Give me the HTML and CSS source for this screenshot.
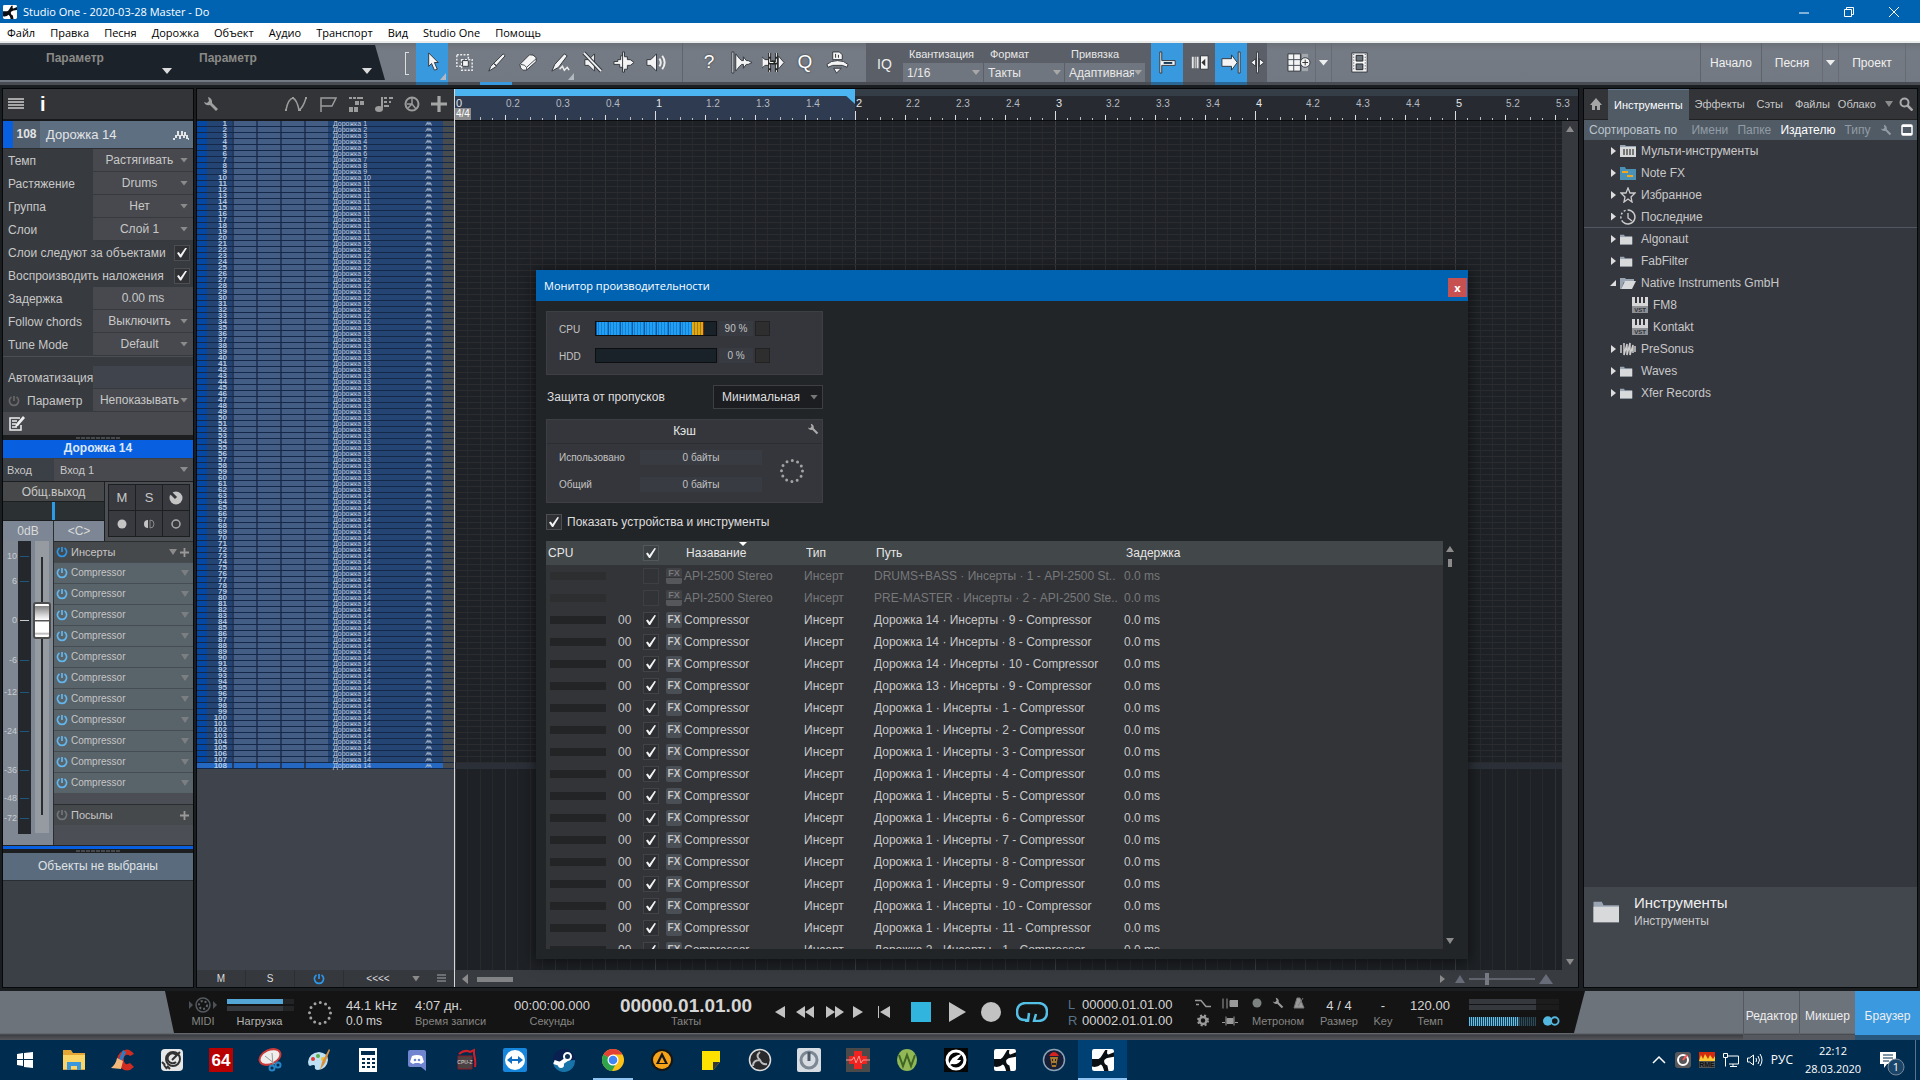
FILE: index.html
```html
<!DOCTYPE html>
<html lang="ru">
<head>
<meta charset="utf-8">
<title>Studio One - 2020-03-28 Master - Do</title>
<link rel="stylesheet" href="styles.css">
</head>
<body>
<svg class="defs" aria-hidden="true">
  <symbol id="logo" viewBox="0 0 20 20"><rect width="20" height="20" rx="2" fill="#fff"/><path d="M0 9h6q2-1 3-3l3-5h2q-1 4 1 4l5-2v4l-5 1q-4 1-4 3 0 3 3 4l1 5h-4q-1-5-3-6-3 3-8 2z" fill="#0a0f14"/></symbol>
  <symbol id="wrench" viewBox="0 0 16 16"><path d="M5 1a5 5 0 0 1 4 6l6 6-2 2-6-6A5 5 0 0 1 1 6l3 1 2-2z" fill="currentColor"/></symbol>
  <symbol id="power" viewBox="0 0 12 12"><path d="M3.500 2a4.600 4.600 0 1 0 5 0M6 1v5" fill="none" stroke="currentColor" stroke-width="1.700"/></symbol>
  <symbol id="wave" viewBox="0 0 16 12"><path d="M0 9h2v2H0zM2 6h2v3H2zM4 2h2v5H4zM6 6h2v4H6zM8 2h2v5H8zM10 6h2v3h-2zM11 3h2v4h-2zM13 6h2v4h-2zM15 9h1v2h-1z" fill="currentColor"/></symbol>
  <symbol id="plus" viewBox="0 0 10 10"><path d="M4 0h2v4h4v2H6v4H4V6H0V4h4z" fill="currentColor"/></symbol>
  <symbol id="spin" viewBox="0 0 26 26"><circle cx="13" cy="13" r="10.500" fill="none" stroke="#a3a3a3" stroke-width="3" stroke-linecap="round" stroke-dasharray="0 5.498"/></symbol>
  <symbol id="folder" viewBox="0 0 16 14"><path d="M0 1h5l1 2h9v10H0z" fill="#9aa5b3"/><path d="M0 4h15v9H0z" fill="#d7d9db"/></symbol>
  <symbol id="vst" viewBox="0 0 16 16"><path d="M0 0h16v9H0z" fill="#d5d6d8"/><path d="M3 0h2v6H3zM7 0h2v6H7zM11 0h2v6h-2z" fill="#33353c"/><path d="M0 9h16v7H0z" fill="#8d9095"/><text x="8" y="15" font-size="6" font-weight="700" text-anchor="middle" fill="#2d2f35" font-family="Liberation Sans, sans-serif">VST</text></symbol>
</svg>

<header class="titlebar">
  <svg class="app-icon"><use href="#logo"/></svg>
  <span class="grow">Studio One - 2020-03-28 Master - Do</span>
  <button class="win" aria-label="Свернуть"><svg viewBox="0 0 10 10"><path d="M0 6h10" /></svg></button>
  <button class="win" aria-label="Восстановить"><svg viewBox="0 0 10 10"><path d="M.5 2.500h7v7h-7zM2.500 2.500v-2h7v7h-2"/></svg></button>
  <button class="win" aria-label="Закрыть"><svg viewBox="0 0 10 10"><path d="M0 0l10 10M10 0L0 10"/></svg></button>
</header>
<nav class="menubar">
  <a href="#">Файл</a><a href="#">Правка</a><a href="#">Песня</a><a href="#">Дорожка</a><a href="#">Объект</a><a href="#">Аудио</a><a href="#">Транспорт</a><a href="#">Вид</a><a href="#">Studio One</a><a href="#">Помощь</a>
</nav>

<div class="toolbar">
  <div class="params"><button class="param">Параметр</button><button class="param">Параметр</button></div>
  <div class="tools">
    <span class="bracket"></span>
    <button class="tool on corner" aria-label="Стрелка"><svg viewBox="0 0 24 24"><path class="w" d="M8 2l10 10h-4l3 7-3 1-3-7-3 3z"/></svg></button>
    <button class="tool" aria-label="Диапазон"><svg viewBox="0 0 24 24"><path d="M4 4h12v12H4zM9 9h11v11H9z" fill="none" stroke="#eee" stroke-width="1.500" stroke-dasharray="2 1.500"/><path class="w" d="M10 10h6v6h-6z"/></svg></button>
    <button class="tool under" aria-label="Разрез"><svg viewBox="0 0 24 24"><path class="w" d="M19 3l2 2-9 10-3-2zM9 13l3 3-8 5 2-5z"/></svg></button>
    <button class="tool" aria-label="Ластик"><svg viewBox="0 0 24 24"><path class="w" d="M3 14L13 4q4-1 7 3v4L10 20H6q-3-2-3-6z"/><path d="M4 14q4 0 6 3l10-9M10 17v3" fill="none" stroke="#444a52"/></svg></button>
    <button class="tool corner" aria-label="Карандаш"><svg viewBox="0 0 24 24"><path class="w" d="M16 3l3 2-9 12-7 4 3-7z"/><path d="M11 19l3-3 2 4 3-3 2 3" fill="none" stroke="#eee" stroke-width="1.500"/></svg></button>
    <button class="tool" aria-label="Заглушить"><svg viewBox="0 0 24 24"><path class="w" d="M4 9h4l6-6v18l-6-6H4z"/><path d="M3 2l18 19" stroke="#333840" stroke-width="4"/><path d="M3 2l18 19" stroke="#eee" stroke-width="2"/></svg></button>
    <button class="tool" aria-label="Сгиб"><svg viewBox="0 0 24 24"><path class="w" d="M1 11h4V9h3V5h2V1h2v5h3v3h3l4 3-4 3h-3v4h-3v3h-2v-5H7v-3H1z"/><path d="M10 2v19" stroke="#32373e"/></svg></button>
    <button class="tool" aria-label="Прослушать"><svg viewBox="0 0 24 24"><path class="w" d="M2 9h4l6-6v18l-6-6H2z"/><path d="M15 8q3 4 0 8M18 5q5 7 0 14" fill="none" stroke="#eee" stroke-width="2"/></svg></button>
  </div>
  <div class="tools second">
    <button class="tool glyph">?</button>
    <button class="tool" aria-label="Транзиенты"><svg viewBox="0 0 24 24"><path class="w" d="M2 1h2v22H2zM6 3l4 5 2 2h2V6l3 4h2l4 2-4 2h-2l-3 4v-4h-2l-2 2-4 5z"/></svg></button>
    <button class="tool" aria-label="Метки"><svg viewBox="0 0 24 24"><path class="w" d="M0 6l3 3h4v6H3l-3 3zM10 10h4v4h-4zM17 5l6 7-6 7z"/><path d="M8 2v20M15 2v20M8 12h7" stroke="#222" stroke-width="3"/><path d="M8 2v20M15 2v20M8 12h7" stroke="#fff" stroke-dasharray="4 2"/></svg></button>
    <button class="tool glyph">Q</button>
    <button class="tool" aria-label="Макросы"><svg viewBox="0 0 24 24"><path class="w" d="M7 1h7l3 3v5H7zM1 14q4-4 11-4t11 4l-1 3-5-2H7l-5 2zM8 18h8l-5 5z"/><path d="M10 3v4M13 4v3" stroke="#333"/></svg></button>
  </div>
  <div class="quant">
    <button class="iq">IQ</button>
    <div class="qf"><label for="q1">Квантизация</label><span class="sel"><select id="q1"><option>1/16</option></select></span></div>
    <div class="qf"><label for="q2">Формат</label><span class="sel"><select id="q2"><option>Такты</option></select></span></div>
    <div class="qf"><label for="q3">Привязка</label><span class="sel"><select id="q3"><option>Адаптивная</option></select></span></div>
    <button class="tool on gapl" aria-label="Привязка к сетке"><svg viewBox="0 0 24 24"><path class="w" d="M4 1h2v9h14v5H6v8H4z"/><path d="M8 12.500h9" stroke="#183a57" stroke-width="2"/></svg></button>
    <button class="tool" aria-label="Следование"><svg viewBox="0 0 24 24"><path d="M4 6h2v12H4zM7 6h1v12H7zM9 6h2v12H9z" fill="#e5e5e5"/><path class="w" d="M13 5h8v14h-8z"/><path d="M18 8v8l-4-4z" fill="#333"/></svg></button>
    <button class="tool on" aria-label="Автопрокрутка"><svg viewBox="0 0 24 24"><path class="w" d="M2 8h10V4l6 8-6 8v-4H2zM19 1h2v22h-2z"/></svg></button>
    <button class="tool slim" aria-label="Курсор"><svg viewBox="0 0 18 24"><path class="w" d="M8 1h2v22H8zM7 8v8l-5-4zM11 8v8l5-4z"/></svg></button>
  </div>
  <button class="tool wide" aria-label="Сетка"><svg viewBox="0 0 26 24"><path class="w" d="M2 3h13v18H2z"/><path d="M16 3h7v18h-7z" fill="#a3a7ae"/><path d="M2 9h21M2 15h21M8 3v18M15.500 3v18" stroke="#444b55" fill="none"/><circle class="w" cx="20" cy="12" r="5"/><path d="M17 12h6M20 9v6" stroke="#333"/></svg></button>
  <button class="tool mini tri" aria-label="Ещё"></button>
  <button class="tool film" aria-label="Видео"><svg viewBox="0 0 24 24"><path class="w" d="M4 2h16v20H4z"/><path d="M8.500 4.500h7v6h-7zM8.500 13.500h7v6h-7z" fill="#6b7179" stroke="#20242a"/><path d="M6 3v18M18 3v18" stroke="#333" stroke-dasharray="1 2"/></svg></button>
  <span class="grow"></span>
  <button class="page">Начало</button><button class="page">Песня</button><button class="tool mini tri" aria-label="Песни"></button><button class="page last">Проект</button><span class="endcap"></span>
</div>

<main class="work">
  <aside class="panel inspector">
    <div class="head"><svg class="i16" viewBox="0 0 16 12"><path d="M0 1h16M0 4h16M0 7h16M0 10h16" stroke="#a7a7a7" stroke-width="2"/></svg><b class="info">i</b></div>
    <div class="trk"><i></i><b>108</b><span>Дорожка 14</span><svg class="i16"><use href="#wave"/></svg></div>
    <div class="form">
      <label for="f1">Темп</label><span class="sel"><select id="f1"><option>Растягивать</option></select></span>
      <label for="f2">Растяжение</label><span class="sel"><select id="f2"><option>Drums</option></select></span>
      <label for="f3">Группа</label><span class="sel"><select id="f3"><option>Нет</option></select></span>
      <label for="f4">Слои</label><span class="sel"><select id="f4"><option>Слой 1</option></select></span>
      <label class="span" for="f5">Слои следуют за объектами<input type="checkbox" id="f5" checked></label>
      <label class="span" for="f6">Воспроизводить наложения<input type="checkbox" id="f6" checked></label>
      <label for="f7">Задержка</label><input class="val" id="f7" value="0.00 ms">
      <label for="f8">Follow chords</label><span class="sel"><select id="f8"><option>Выключить</option></select></span>
      <label for="f9">Tune Mode</label><span class="sel"><select id="f9"><option>Default</option></select></span>
      <div class="sep"></div>
      <label for="f10">Автоматизация</label><input class="val cool" id="f10" value="">
      <label for="f11" class="dim"><svg class="i12"><use href="#power"/></svg>Параметр</label><span class="sel"><select id="f11"><option>Непоказывать</option></select></span>
    </div>
    <div class="note"><svg class="i16" viewBox="0 0 16 16"><path d="M11 3H1v12h11v-5M3 6h5M3 9h4M3 12h5" fill="none" stroke="#eee" stroke-width="1.500"/><path d="M14 1l2 2-7 8-3 1 1-3z" fill="#eee"/></svg></div>
    <div class="grip"></div>
    <div class="chan-name">Дорожка 14</div>
    <div class="input-row"><label for="inp">Вход</label><span class="sel"><select id="inp"><option>Вход 1</option></select></span></div>
    <div class="chan-top">
      <div class="outs"><button class="out">Общ.выход</button><div class="pan"></div><div class="db"><span>0dB</span><span>&lt;C&gt;</span></div></div>
      <div class="ms"><button>M</button><button>S</button><button aria-label="Монитор"><svg viewBox="0 0 14 14"><circle cx="7" cy="7" r="6.500" fill="#c4c4c4"/><path d="M7 7L2 2" stroke="#33363b" stroke-width="3"/></svg></button><button aria-label="Запись"><svg viewBox="0 0 14 14"><circle cx="7" cy="7" r="4.500" fill="#c4c4c4"/></svg></button><button aria-label="Моно"><svg viewBox="0 0 14 14"><path d="M6 3a4 4 0 0 0 0 8z" fill="#c4c4c4"/><path d="M8 3a4 4 0 0 1 0 8z" fill="none" stroke="#888"/></svg></button><button aria-label="Стерео"><svg viewBox="0 0 14 14"><circle cx="7" cy="7" r="4" fill="none" stroke="#aaa" stroke-width="1.500"/></svg></button></div>
    </div>
    <div class="strip">
      <div class="fader">
        <div class="scale"><span>10</span><span>6</span><span>0</span><span>-6</span><span>-12</span><span>-24</span><span>-36</span><span>-48</span><span>-72</span></div>
        <input type="range" aria-label="Громкость" min="0" max="100" value="76">
      </div>
      <div class="inserts">
        <div class="ins-head on"><svg class="i12"><use href="#power"/></svg><span>Инсерты</span><i class="dn"></i><svg class="i9"><use href="#plus"/></svg></div>
        <div id="inserts"></div>
        <div class="ins-gap"></div>
        <div class="ins-head"><svg class="i12"><use href="#power"/></svg><span>Посылы</span><svg class="i9"><use href="#plus"/></svg></div>
      </div>
    </div>
    <div class="blue-line"></div>
    <div class="grip"></div>
    <div class="none">Объекты не выбраны</div>
  </aside>

  <section class="panel editor">
    <div class="tracks">
      <div class="head">
        <svg class="i16"><use href="#wrench"/></svg><span class="grow"></span>
        <svg class="i22" viewBox="0 0 24 16"><path d="M2 14Q4 3 9 2q4 2 6 12Q19 12 22 2" fill="none" stroke="#9c9c9c" stroke-width="1.500"/><path d="M1 13h2v2H1zM8 1h2v2H8zM14 13h3v2h-3zM21 1h2v2h-2z" fill="#9c9c9c"/></svg>
        <svg class="i18" viewBox="0 0 18 16"><path d="M2 16V2h15l-4 8H2" fill="none" stroke="#9c9c9c" stroke-width="1.500"/></svg>
        <svg class="i16" viewBox="0 0 16 16"><path d="M1 1h3v2H1zM5 1h3v2H5zM9 1h6v2H9zM7 5h4v4H7zM12 5h4v4h-4zM1 11h4v5H1zM6 11h4v5H6z" fill="#9c9c9c"/></svg>
        <svg class="i18" viewBox="0 0 18 16"><path d="M7 1v11" stroke="#9c9c9c" stroke-width="2"/><ellipse cx="4" cy="13" rx="4" ry="3" fill="#9c9c9c"/><path d="M9 2h3M14 2h4M9 6h3M14 6h2M9 10h5" stroke="#9c9c9c" stroke-width="2"/></svg>
        <svg class="i16" viewBox="0 0 16 16"><circle cx="8" cy="8" r="6.500" fill="none" stroke="#9c9c9c" stroke-width="2"/><path d="M8 2v6H3M8 8l4 5M8 8l-4 4" fill="none" stroke="#9c9c9c" stroke-width="1.500"/></svg>
        <svg class="i16" viewBox="0 0 10 10"><path d="M4 0h2v4h4v2H6v4H4V6H0V4h4z" fill="#a5a5a5"/></svg>
      </div>
      <div id="tracks"></div>
      <div class="track-foot"><button>M</button><button>S</button><button class="pw" aria-label="Питание"><svg class="i12"><use href="#power"/></svg></button><button class="more">&lt;&lt;&lt;&lt;</button><i class="dn"></i><svg class="i9" viewBox="0 0 9 9"><path d="M0 1h9M0 4h9M0 7h9" stroke="#6c6f74" stroke-width="2"/></svg></div>
    </div>
    <div class="arrange">
      <div class="ruler"><div class="loop"></div><div id="beats"></div><span class="sig">4/4</span></div>
      <div class="canvas"><div class="lanes"></div></div>
      <div class="vscroll"><i class="up"></i><i class="dn"></i></div>
      <div class="hscroll"><i class="lt"></i><b></b><span class="grow"></span><i class="rt"></i><i class="up s"></i><span class="zoom"><u></u></span><i class="up b"></i></div>
    </div>

    <div class="dialog" role="dialog" aria-label="Монитор производительности">
      <div class="dlg-title"><span>Монитор производительности</span><button aria-label="Закрыть">x</button></div>
      <div class="dlg-body">
        <div class="box meters">
          <span>CPU</span><div class="meter"><i style="width:80%"></i><em style="width:10%"></em></div><b>90 %</b><u></u>
          <span>HDD</span><div class="meter"></div><b>0 %</b><u></u>
        </div>
        <div class="protect"><label for="pr">Защита от пропусков</label><span class="sel"><select id="pr"><option>Минимальная</option></select></span></div>
        <div class="box cache">
          <div class="cache-h"><span>Кэш</span><svg class="i12"><use href="#wrench"/></svg></div>
          <div class="cache-b"><span>Использовано</span><b>0 байты</b><svg class="i26"><use href="#spin"/></svg><span>Общий</span><b>0 байты</b></div>
        </div>
        <label class="show" for="sh"><input type="checkbox" id="sh" checked>Показать устройства и инструменты</label>
        <div class="list">
          <div class="list-view">
            <table>
              <colgroup><col class="c1"><col class="c2"><col class="c3"><col class="c4"><col class="c5"><col class="c6"><col class="c7"><col></colgroup>
              <thead><tr><th colspan="2">CPU</th><th><input type="checkbox" aria-label="Все" checked></th><th></th><th class="sorted">Назавание</th><th>Тип</th><th>Путь</th><th>Задержка</th></tr></thead>
              <tbody id="devices"></tbody>
            </table>
          </div>
          <div class="list-scroll"><i class="up"></i><b></b><i class="dn"></i></div>
        </div>
      </div>
    </div>
  </section>

  <aside class="panel browser">
    <div class="tabs">
      <a href="#" class="home" aria-label="Домой"><svg class="i12" viewBox="0 0 12 12"><path d="M6 0l6 7h-2v5H7V8H5v4H2V7H0z" fill="#a5a5a5"/></svg></a>
      <a href="#" class="act">Инструменты</a><a href="#">Эффекты</a><a href="#">Сэты</a><a href="#">Файлы</a><a href="#" class="cloud">Облако</a><i class="dn"></i>
      <svg class="i14" viewBox="0 0 14 14"><circle cx="5.500" cy="5.500" r="4" fill="none" stroke="#aaa" stroke-width="2"/><path d="M8.500 8.500l5 5" stroke="#aaa" stroke-width="2.500"/></svg>
    </div>
    <div class="sort"><span class="lead">Сортировать по</span><a href="#">Имени</a><a href="#">Папке</a><a href="#" class="act">Издателю</a><a href="#">Типу</a><svg class="i12"><use href="#wrench"/></svg><svg class="i12" viewBox="0 0 12 12"><rect x="1" y="1" width="10" height="10" rx="1" fill="none" stroke="#fff" stroke-width="1.500"/><path d="M1 1h10v2H1zM1 9h10v2H1z" fill="#fff"/></svg></div>
    <ul class="tree">
      <li><i class="rt"></i><svg viewBox="0 0 16 14"><path d="M0 1h5l1 1h10v11H0z" fill="#9aa5b3"/><path d="M0 3h16v10H0z" fill="#d7d9db"/><path d="M4 5v6M7 5v6M10 5v6M13 5v6" stroke="#555" stroke-width="1.500"/></svg>Мульти-инструменты</li>
      <li><i class="rt"></i><svg viewBox="0 0 16 14"><path d="M0 1h5l1 2h10v11H0z" fill="#4b90b5"/><path d="M2 6h6M7 10h6" stroke="#f5a71c" stroke-width="2"/></svg>Note FX</li>
      <li><i class="rt"></i><svg viewBox="0 0 16 16"><path d="M8 1l2 5h5l-4 4 1 5-4-3-4 3 1-5-4-4h5z" fill="none" stroke="#ccc" stroke-width="1.300"/></svg>Избранное</li>
      <li class="last"><i class="rt"></i><svg viewBox="0 0 16 16"><path d="M8 1a7 7 0 1 1-5 12" fill="none" stroke="#ccc" stroke-width="1.500"/><path d="M3 13A7 7 0 0 1 8 1" fill="none" stroke="#ccc" stroke-width="1.500" stroke-dasharray="2 2"/><path d="M8 4v5l4 3" fill="none" stroke="#ccc" stroke-width="1.300"/></svg>Последние</li>
      <li><i class="rt"></i><svg class="f"><use href="#folder"/></svg>Algonaut</li>
      <li><i class="rt"></i><svg class="f"><use href="#folder"/></svg>FabFilter</li>
      <li><i class="open"></i><svg viewBox="0 0 16 14"><path d="M0 2h5l1 1h8v3H4l-3 7H0z" fill="#9aa5b3"/><path d="M5 5h11l-4 8H1z" fill="#d7d9db"/></svg>Native Instruments GmbH</li>
      <li class="sub"><svg><use href="#vst"/></svg>FM8</li>
      <li class="sub"><svg><use href="#vst"/></svg>Kontakt</li>
      <li><i class="rt"></i><svg viewBox="0 0 16 14"><path d="M1 3v8M4 1v12l3-11v11l3-12v12l3-10v8M15 4v6" fill="none" stroke="#ccc" stroke-width="1.500"/></svg>PreSonus</li>
      <li><i class="rt"></i><svg class="f"><use href="#folder"/></svg>Waves</li>
      <li><i class="rt"></i><svg class="f"><use href="#folder"/></svg>Xfer Records</li>
    </ul>
    <div class="preview"><svg viewBox="0 0 16 14"><use href="#folder"/></svg><div><strong>Инструменты</strong><span>Инструменты</span></div></div>
  </aside>
</main>

<div class="transport">
  <div class="tp">
    <div class="c"><svg class="midi" viewBox="0 0 28 16"><circle cx="14" cy="8" r="7" fill="none" stroke="#555a60" stroke-width="1.500"/><circle cx="14" cy="8" r="4" fill="none" stroke="#60656b" stroke-width="2" stroke-dasharray="2 2"/><path d="M0 4l4 4-4 4zM24 4l4 4-4 4z" fill="#4c5157"/></svg><small>MIDI</small></div>
    <div class="load"><div class="bar"><i style="width:83%"></i></div><div class="bar"></div><small>Нагрузка</small></div>
    <div class="c mid"><svg class="i26"><use href="#spin"/></svg></div>
    <div class="l"><span>44.1 kHz</span><span class="tight">0.0 ms</span></div>
    <div class="l"><span>4:07 дн.</span><small>Время записи</small></div>
    <div class="c"><span>00:00:00.000</span><small>Секунды</small></div>
    <div class="c"><strong>00000.01.01.00</strong><small>Такты</small></div>
    <div class="nav"><button aria-label="Назад"><svg viewBox="0 0 12 12"><path d="M11 0v12L1 6z"/></svg></button><button class="w2" aria-label="Перемотка"><svg viewBox="0 0 18 12"><path d="M9 0v12L0 6zM18 0v12L9 6z"/></svg></button><button class="w2" aria-label="Вперёд быстро"><svg viewBox="0 0 18 12"><path d="M0 0v12l9-6zM9 0v12l9-6z"/></svg></button><button aria-label="Вперёд"><svg viewBox="0 0 12 12"><path d="M1 0v12l10-6z"/></svg></button><button class="rtz" aria-label="В начало"><svg viewBox="0 0 12 12"><path d="M0 0h1v12H0zM12 0v12L2 6z"/></svg></button></div>
    <div class="main"><button aria-label="Стоп"><svg viewBox="0 0 20 20"><path d="M0 0h20v20H0z" fill="#31b5df"/></svg></button><button aria-label="Пуск"><svg viewBox="0 0 20 20"><path d="M3 0v20l17-10z"/></svg></button><button aria-label="Запись"><svg viewBox="0 0 20 20"><circle cx="10" cy="10" r="10"/></svg></button><button class="cyc" aria-label="Цикл"><svg viewBox="0 0 32 20"><path d="M11 18H9Q1 18 1 10T9 1h14q8 1 8 9t-8 9h-5l2-7M13 11l-1 8H9" fill="none" stroke="#54c0e8" stroke-width="2.500"/></svg></button></div>
    <div class="lr"><span>L</span><b>00000.01.01.00</b><span>R</span><b>00002.01.01.00</b></div>
    <div class="four">
      <svg viewBox="0 0 16 12"><path d="M0 3h6l5 6h5M1 7h3M9 3" fill="none" stroke="#999" stroke-width="1.500"/></svg>
      <svg viewBox="0 0 16 12"><path d="M1 1v10M5 1v10M8 3h8v6H8z" stroke="#999" fill="#999"/></svg>
      <svg viewBox="0 0 16 12"><circle cx="8" cy="6" r="3.500" fill="none" stroke="#999" stroke-width="2.500"/><circle cx="8" cy="6" r="5" fill="none" stroke="#999" stroke-width="2" stroke-dasharray="2 2"/></svg>
      <svg viewBox="0 0 16 12"><path d="M4 2v9M12 2v9M5 4h6v5H5zM0 8h3M13 8h3" stroke="#999" fill="#999"/></svg>
    </div>
    <div class="c"><span class="met"><svg viewBox="0 0 12 12"><circle cx="6" cy="6" r="4.500" fill="#7b8280"/></svg><svg><use href="#wrench"/></svg><svg viewBox="0 0 12 12"><path d="M4 1h3l4 10H1zM10 1L5 9" fill="#999" stroke="#777"/></svg></span><small>Метроном</small></div>
    <div class="c"><span>4 / 4</span><small>Размер</small></div>
    <div class="c"><span>-</span><small>Key</small></div>
    <div class="c"><span>120.00</span><small>Темп</small></div>
    <div class="out-m"><div class="lv"></div><div class="lv"></div><div class="vol"><i></i><svg viewBox="0 0 18 10"><circle cx="5" cy="5" r="5" fill="#54b7df"/><circle cx="12.500" cy="5" r="4" fill="#141414" stroke="#54b7df" stroke-width="2"/></svg></div></div>
  </div>
  <button class="view">Редактор</button><button class="view">Микшер</button><button class="view on">Браузер</button>
</div>

<footer class="taskbar">
  <button aria-label="Пуск"><svg viewBox="0 0 24 24"><path d="M4 6l6-1v6H4zM11 5l9-1v7h-9zM4 12h6v6l-6-1zM11 12h9v8l-9-1z" fill="#fff"/></svg></button>
  <button aria-label="Проводник"><svg viewBox="0 0 24 24"><path d="M1 2h8l2 3h12v17H1z" fill="#e5a634"/><path d="M1 7h22v14H1z" fill="#fcd567"/><path d="M5 22v-8h14v8h-4v-4H9v4z" fill="#3b97dd"/></svg></button>
  <button aria-label="CCleaner"><svg viewBox="0 0 24 24"><path d="M23 6Q17-2 10 4t-1 15q7 7 14 0l-4-4q-5 3-6-2t2-6q2-1 4 1z" fill="#cf2c22"/><path d="M12 2l3 2-4 9-3-2z" fill="#2d7cc2"/><path d="M6 10l6 3-2 8-10-1q5-4 6-10z" fill="#f2b97b"/></svg></button>
  <button aria-label="Контроллер"><svg viewBox="0 0 24 24"><rect x="1" y="1" width="22" height="22" rx="4" fill="#e7e7e7"/><circle cx="13" cy="11" r="7" fill="none" stroke="#333" stroke-width="2"/><path d="M17 8a5 5 0 1 0-1 6M12 12l8-8M4 17l3 4M7 18l3 3M2 14l3 3" fill="none" stroke="#333" stroke-width="2"/></svg></button>
  <button aria-label="AIDA64"><svg viewBox="0 0 24 24"><path d="M0 0h24v24H0z" fill="#b80000"/><text x="12" y="18" font-size="17" font-weight="700" text-anchor="middle" fill="#fff" font-family="Liberation Sans, sans-serif">64</text></svg></button>
  <button aria-label="Ножницы"><svg viewBox="0 0 24 24"><ellipse cx="12" cy="9" rx="11" ry="7" transform="rotate(-25 12 9)" fill="#eee" stroke="#cc3b39" stroke-width="2"/><path d="M7 8l10 8M14 5l1 12" stroke="#999"/><circle cx="14" cy="20" r="2.500" fill="none" stroke="#2585c7" stroke-width="2"/><circle cx="20" cy="17" r="2.500" fill="none" stroke="#2585c7" stroke-width="2"/></svg></button>
  <button aria-label="Paint"><svg viewBox="0 0 24 24"><path d="M1 14Q2 5 12 4q9 1 9 8-1 9-10 10-4 0-3-4-1-2-5 0-2-1-2-4z" fill="#bfe0f2"/><circle cx="6" cy="11" r="2" fill="#dd3b30"/><circle cx="11" cy="8" r="2" fill="#57ad45"/><circle cx="16" cy="11" r="2" fill="#f1bd2d"/><path d="M22 1l-7 13-2 8 5-7 5-13z" fill="#d98f3d"/></svg></button>
  <button aria-label="Калькулятор"><svg viewBox="0 0 24 24"><path d="M3 0h18v24H3z" fill="#fff"/><path d="M5 3h14v4H5z" fill="#002c4d"/><path d="M6 11h13M6 15h13M6 19h13" stroke="#002c4d" stroke-width="2" stroke-dasharray="3 2"/></svg></button>
  <button aria-label="Discord"><svg viewBox="0 0 24 24"><path d="M5 2h14q2 0 2 2v19l-5-4H5q-2 0-2-2V4q0-2 2-2z" fill="#7184cf"/><path d="M7 8q5-2 10 0l2 6-3 2-2-1h-4l-2 1-3-2z" fill="#fff"/><circle cx="10" cy="12" r="1.300" fill="#7184cf"/><circle cx="14" cy="12" r="1.300" fill="#7184cf"/></svg></button>
  <button aria-label="CPU-Z"><svg viewBox="0 0 24 24"><path d="M4 8h14v13H4z" fill="#4b4244" stroke="#8e1a20"/><path d="M5 6q6-5 11-2l4-2v4q2 8 1 13" fill="none" stroke="#d11e27" stroke-width="2"/><text x="11" y="16" font-size="5" font-weight="700" text-anchor="middle" fill="#bbb" font-family="Liberation Sans, sans-serif">CPU-Z</text></svg></button>
  <button aria-label="TeamViewer"><svg viewBox="0 0 24 24"><rect width="24" height="24" rx="2" fill="#1686dc"/><circle cx="12" cy="12" r="10" fill="#fff"/><path d="M4 12l5-4v3h6V8l5 4-5 4v-3H9v3z" fill="#1270c4"/></svg></button>
  <button aria-label="Steam"><svg viewBox="0 0 24 24"><circle cx="12" cy="12" r="11" fill="#0a2050"/><path d="M1 14a11 11 0 0 0 22-2z" fill="#1773a8"/><path d="M2 14l6 2 7-5" stroke="#fff" stroke-width="4" fill="none"/><circle cx="15.500" cy="8.500" r="3.500" fill="#0f2d55" stroke="#fff" stroke-width="2"/><circle cx="9" cy="17" r="3" fill="#fff"/></svg></button>
  <button class="run" aria-label="Chrome"><svg viewBox="0 0 24 24"><circle cx="12" cy="12" r="11" fill="#fbc116"/><path d="M12 12L2.500 6.500A11 11 0 0 1 21.500 6.500H12z" fill="#e34133"/><path d="M12 12L2.500 6.500A11 11 0 0 0 11 23l5-9z" fill="#2fa24c"/><circle cx="12" cy="12" r="5.500" fill="#fff"/><circle cx="12" cy="12" r="4.300" fill="#4285f4"/></svg></button>
  <button aria-label="AIMP"><svg viewBox="0 0 24 24"><circle cx="12" cy="12" r="11" fill="#151515"/><circle cx="12" cy="12" r="9" fill="#f6a31a"/><path d="M12 4l6 12H6z" fill="#151515"/><path d="M12 9l3 6H9z" fill="#f6a31a"/></svg></button>
  <button aria-label="Заметки"><svg viewBox="0 0 24 24"><path d="M3 3h18v11l-7 8H3z" fill="#ffe100"/><path d="M14 22v-8h7z" fill="#363636"/></svg></button>
  <button aria-label="OBS"><svg viewBox="0 0 24 24"><circle cx="12" cy="12" r="10.500" fill="#2a2a2c" stroke="#ddd" stroke-width="1.500"/><path d="M12 4q-5 4 0 8 2 5 7 4M12 12q-7 0-7 6" fill="none" stroke="#bbb" stroke-width="2"/></svg></button>
  <button aria-label="Громкость"><svg viewBox="0 0 24 24"><rect width="24" height="24" rx="2" fill="#d7dde3"/><circle cx="12" cy="12" r="8" fill="none" stroke="#7c8894" stroke-width="3"/><path d="M12 4v9" stroke="#4c5967" stroke-width="3"/></svg></button>
  <button aria-label="LatencyMon"><svg viewBox="0 0 24 24"><path d="M0 0h24v24H0z" fill="#4a4a4a"/><path d="M8 3h8v5h5v8h-5v5H8v-5H3V8h5z" fill="#ef2320"/><path d="M0 12h6l2-3 2 6 3-7 2 7 2-3h7" fill="none" stroke="#ff9992"/></svg></button>
  <button aria-label="Waves"><svg viewBox="0 0 24 24"><ellipse cx="12" cy="12" rx="10" ry="11" fill="#91b854"/><path d="M4 7l4 11 4-11 4 11 4-11" fill="none" stroke="#3e6426" stroke-width="2"/></svg></button>
  <button aria-label="Драйвер"><svg viewBox="0 0 24 24"><path d="M0 0h24v24H0z" fill="#050505"/><circle cx="12" cy="12" r="9" fill="none" stroke="#fff" stroke-width="3"/><path d="M4 18Q8 7 18 6l-5 6h4q-2 5-9 4" fill="#fff"/></svg></button>
  <button aria-label="Studio One 3"><svg viewBox="0 0 24 24"><use href="#logo" x="1" y="1" width="22" height="22"/></svg></button>
  <button aria-label="Плеер"><svg viewBox="0 0 24 24"><circle cx="12" cy="12" r="10.500" fill="#171e36" stroke="#8ba1b6" stroke-width="1.500"/><path d="M7 8q5-8 10 0z" fill="#d42320"/><path d="M8 9h8l-2 10h-4z" fill="#a9782c"/><path d="M10 12h1M13 12h1M10 16h4" stroke="#222" stroke-width="2"/></svg></button>
  <button class="run cur" aria-label="Studio One"><svg viewBox="0 0 24 24"><use href="#logo" x="1" y="1" width="22" height="22"/></svg></button>
  <span class="grow"></span>
  <div class="tray">
    <svg viewBox="0 0 16 16"><path d="M2 11l6-6 6 6" fill="none" stroke="#fff" stroke-width="1.500"/></svg>
    <svg viewBox="0 0 16 16"><rect width="16" height="16" rx="3" fill="#58585a"/><circle cx="8" cy="8" r="5" fill="none" stroke="#fff" stroke-width="2"/><path d="M8 8l4-5" stroke="#f55" stroke-width="2"/></svg>
    <svg viewBox="0 0 16 16"><path d="M0 0h16v9H0z" fill="#d22b0d"/><path d="M0 9l2-6 2 4 2-5 3 5 2-4 3 4 2-3v6z" fill="#ffca35"/><path d="M0 9h16v7H0z" fill="#555"/><text x="8" y="15" font-size="7" font-weight="700" text-anchor="middle" fill="#111" font-family="Liberation Sans, sans-serif">RME</text></svg>
    <svg viewBox="0 0 16 16"><path d="M5 4h10.500v8H6M10 12v3M7 14.500h7M.5 1.500h4v4h-4zM2.500 5.500v9" fill="none" stroke="#fff"/></svg>
    <svg viewBox="0 0 16 16"><path d="M.5 6h2l4-3v10l-4-3h-2zM9 6q1 2 0 4M11 4q3 4 0 8M13 2q4 6 0 12" fill="none" stroke="#fff"/></svg>
    <span>РУС</span>
    <div class="clock"><span>22:12</span><span>28.03.2020</span></div>
    <svg class="note-ic" viewBox="0 0 26 26"><path d="M1 2h16v12H8l-3 4v-4H1z" fill="#fff"/><path d="M4 5h10M4 8h10M4 11h6" stroke="#002c4d"/><circle cx="17" cy="17" r="8" fill="#1b4568" stroke="#76899a"/><text x="17" y="21" font-size="11" text-anchor="middle" fill="#fff" font-family="Open Sans, sans-serif">1</text></svg>
  </div>
  <span class="peek"></span>
</footer>
<script src="app.js"></script>
</body>
</html>
```
FILE: app.js
```js
function fill(id, html) { document.getElementById(id).innerHTML = html; }

// Insert slots of the selected channel
fill('inserts', Array.from({ length: 11 }, () =>
  '<div class="ins"><svg class="i12"><use href="#power"/></svg><span>Compressor</span><i class="dn"></i></div>').join(''));

// Track list: 108 collapsed tracks
function trackName(n) {
  if (n <= 10) return n;
  if (n <= 20) return 11;
  if (n <= 34) return 12;
  if (n <= 62) return 13;
  return 14;
}
let rows = '';
for (let n = 1; n <= 108; n++) {
  rows += `<div class="tr${n === 108 ? ' cur' : ''}"><i class="clr"></i><b>${n}</b><i></i><i></i><i></i><i></i><span>Дорожка ${trackName(n)}</span><svg><use href="#wave"/></svg><u></u></div>`;
}
fill('tracks', rows);

// Ruler: four beats in a bar
let beats = '';
for (let i = 0; i < 23; i++) {
  const bar = Math.floor(i / 4), q = i % 4;
  beats += `<span class="${q ? 'beat' : 'bar1'}">${q ? bar + '.' + (q + 1) : bar}</span>`;
}
fill('beats', beats);

// Performance table
const list = [
  ['API-2500 Stereo', 'DRUMS+BASS · Инсерты · 1 - API-2500 St..', true],
  ['API-2500 Stereo', 'PRE-MASTER · Инсерты · 2 - API-2500 Ste..', true],
];
[[14, 9], [14, 8], [14, 10], [13, 9], [1, 1], [1, 2], [1, 3], [1, 4], [1, 5], [1, 6], [1, 7], [1, 8], [1, 9], [1, 10], [1, 11], [2, 1]]
  .forEach(([t, i]) => list.push(['Compressor', `Дорожка ${t} · Инсерты · ${i} - Compressor`, false]));
fill('devices', list.map(([name, path, off]) =>
  `<tr${off ? ' class="off"' : ''}><td><div class="use"></div></td><td>${off ? '' : '00'}</td><td><input type="checkbox" aria-label="${name}"${off ? '' : ' checked'}></td><td><span class="fx">FX</span></td><td>${name}</td><td>Инсерт</td><td>${path}</td><td>0.0 ms</td></tr>`).join(''));
```
FILE: styles.css
```css
* { box-sizing: border-box; }
html, body { height: 100%; }
body { margin: 0; display: flex; flex-direction: column; overflow: hidden; background: #1b1e20; color: #c8c8c8; font: 12px/16px "Liberation Sans", Arial, sans-serif; }
button, select, input { font: inherit; color: inherit; background: none; border: 0; padding: 0; margin: 0; border-radius: 0; }
a { color: inherit; text-decoration: none; }
svg { display: block; flex: none; }
.defs { display: none; }
.grow { flex: 1; }
.i9 { width: 9px; height: 9px; }
.i12 { width: 12px; height: 12px; }
.i14 { width: 14px; height: 14px; }
.i16 { width: 16px; height: 16px; }
.i18 { width: 18px; height: 16px; }
.i22 { width: 24px; height: 16px; }
.i26 { width: 26px; height: 26px; }

/* arrows */
.dn, .up, .lt, .rt, .open { display: block; flex: none; width: 8px; height: 6px; background: #8b8b8b; }
.dn { clip-path: polygon(0 0, 100% 0, 50% 100%); }
.up { clip-path: polygon(50% 0, 100% 100%, 0 100%); }
.lt { width: 6px; height: 10px; clip-path: polygon(100% 0, 100% 100%, 0 50%); }
.rt { width: 5px; height: 8px; clip-path: polygon(0 0, 100% 50%, 0 100%); }
.open { width: 6px; clip-path: polygon(100% 0, 100% 100%, 0 100%); }

/* form controls */
.sel { display: flex; align-items: center; min-width: 0; }
.sel select { appearance: none; flex: 1; min-width: 0; height: 100%; }
.sel::after { content: ""; width: 8px; height: 5px; margin: 0 5px; background: #8b8b8b; clip-path: polygon(0 0, 100% 0, 50% 100%); }
input[type=checkbox] { appearance: none; display: grid; place-items: center; width: 16px; height: 16px; border: 1px solid #4c4e52; background: #2f3134; flex: none; }
input[type=checkbox]:checked::before { content: ""; width: 10px; height: 10px; background: #f2f2f2; clip-path: polygon(0 55%, 18% 45%, 35% 70%, 85% 0, 100% 5%, 42% 100%, 30% 100%); }

.titlebar { display: flex; align-items: center; height: 23px; flex: none; padding-right: 4px; background: #0063b1; color: #fff; font: 11px/22px "Open Sans", "Noto Sans", sans-serif; }
.app-icon { width: 14px; height: 14px; margin: 0 6px 0 3px; }
.win { width: 45px; height: 22px; display: grid; place-items: center; }
.win svg { width: 10px; height: 10px; fill: none; stroke: #fff; }
.menubar { display: flex; gap: 15px; height: 20px; flex: none; padding-left: 7px; background: #fff; border-bottom: 2px solid #e9ebea; color: #000; font: 11px/19px "Open Sans", "Noto Sans", sans-serif; }

.toolbar { display: flex; height: 42px; flex: none; border-bottom: 3px solid #494c53; background: linear-gradient(#6b7078, #757b84 20%, #737982); }
.params { display: flex; width: 385px; height: 35px; margin-top: 2px; background: #1c222a; clip-path: polygon(0 0, 375px 0, 385px 100%, 0 100%); }
.param { width: 200px; display: block; margin-right: -47px; text-align: left; padding: 0 0 10px 46px; font-weight: 700; color: #8a8a87; position: relative; }
.param + .param { width: 232px; margin: 0; }
.param::after { content: ""; position: absolute; right: 28px; bottom: 6px; width: 10px; height: 6px; background: #dcdcdc; clip-path: polygon(0 0, 100% 0, 50% 100%); }
.param + .param::after { right: 13px; }
.tools { display: flex; padding-right: 10px; }
.second { border-left: 1px solid #5f646c; padding: 0 13px 0 10px; }
.bracket { width: 4px; height: 23px; margin: 9px 7px 0 20px; border: 1px solid #ddd; border-right: 0; }
.tool { width: 32px; height: 42px; padding-bottom: 4px; display: grid; place-items: center; position: relative; color: #fff; }
.tool svg { width: 23px; height: 23px; }
.tool .w, .w { fill: #f4f4f4; stroke: #32373e; stroke-width: 1; }
.tool.on { background: linear-gradient(#3999de 93%, #2c6895 93%); }
.tool.under { border-bottom: 3px solid #3999de; padding-bottom: 1px; }
.corner::after { content: ""; position: absolute; right: 2px; bottom: 5px; width: 6px; height: 7px; background: #b3b9c0; clip-path: polygon(100% 0, 100% 100%, 0 100%); }
.glyph { font-size: 19px; text-shadow: 0 0 2px #222; }
.quant { display: flex; background: #5b5f67; }
.iq { width: 37px; padding: 3px 0 0; font-size: 14px; color: #eee; }
.qf { width: 81px; padding-right: 1px; color: #e8e8e8; }
.qf label { display: block; height: 20px; padding: 3px 0 0 6px; font-size: 11px; }
.qf .sel { height: 19px; background: #70767f; padding-left: 4px; font-size: 12px; }
.qf .sel::after { margin: 0 3px 0 0; background: #a8a8a8; }
.gapl { margin-left: 5px; }
.tool.slim { width: 20px; }
.tool.slim svg { width: 17px; }
.tool.wide { width: 48px; padding-right: 4px; justify-items: end; }
.tool.wide svg { width: 25px; }
.tool.mini { width: 17px; height: 39px; border: solid #676c74; border-width: 0 1px; }
.tri::after { content: ""; width: 10px; height: 6px; background: #eee; clip-path: polygon(0 0, 100% 0, 50% 100%); margin-top: 4px; }
.film { width: 54px; }
.page { width: 61px; border-left: 1px solid #5f646c; color: #f0f0f0; }
.page.last { width: 66px; border: 0; }
.endcap { width: 15px; border-left: 1px solid #676c74; }

.work { flex: 1; min-height: 0; display: grid; grid-template-columns: 192px minmax(0, 1fr) 335px; column-gap: 2px; padding: 3px 2px 3px 2px; }
.panel { border: 1px solid #070809; background: #383b40; min-height: 0; overflow: hidden; }
.head { display: flex; align-items: center; height: 32px; flex: none; background: #323438; border-bottom: 2px solid #17191b; color: #a0a0a0; }

/* inspector */
.inspector { display: flex; flex-direction: column; background: #3b3f46; }
.inspector .head { padding-left: 5px; gap: 16px; }
.info { font-size: 20px; color: #fff; }
.trk { display: flex; align-items: center; height: 28px; flex: none; background: #5f6f82; border-bottom: 1px solid #2c2e31; font-size: 13px; color: #e2e4e6; }
.trk i { width: 10px; height: 100%; background: #0860e0; }
.trk b { width: 27px; line-height: 27px; background: #4f5d6c; text-align: center; font-size: 12px; }
.trk span { flex: 1; padding-left: 6px; }
.trk svg { margin-right: 4px; }
.form { display: grid; grid-template: repeat(9, 23px) 10px repeat(2, 23px) / 90px 1fr; background: #373a3f; }
.form label { display: flex; align-items: center; padding-left: 5px; white-space: nowrap; }
.form .span { grid-column: 1 / 3; justify-content: space-between; padding-right: 3px; }
.form .sel, .form .val { background: #47494e; border-bottom: 1px solid #36393d; min-width: 0; width: 100%; text-align: center; }
.form select { text-align-last: center; padding-left: 6px; }
.form .sel::after { margin-left: 0; }
.form .val.cool { background: #40444d; }
.form .sep { grid-column: 1 / 3; border-top: 1px solid #4b4e52; }
.form .dim svg { color: #686868; margin: 0 7px 0 0; }
.note { height: 23px; flex: none; padding: 3px 6px; background: #47494e; }
.grip { height: 4px; flex: none; background: repeating-linear-gradient(90deg, #45484c 0 4px, #1c1e20 4px 5px) center / 44px 2px no-repeat #1c1e20; }
.note + .grip { height: 5px; }
.chan-name { height: 18px; flex: none; background: #0860e0; color: #dce8fa; font-weight: 700; text-align: center; line-height: 17px; }
.input-row { display: grid; grid-template-columns: 51px 1fr; height: 23px; flex: none; align-items: center; font-size: 11px; }
.input-row label { padding-left: 4px; }
.input-row .sel { height: 22px; background: #47494e; padding-left: 6px; }
.chan-top { display: grid; grid-template-columns: 101px 1fr; height: 60px; flex: none; border-top: 1px solid #1c1e20; }
.out { display: block; width: 100%; height: 19px; background: #47484a; }
.pan { height: 20px; border: 1px solid #1c1e20; border-width: 1px 0; background: linear-gradient(#2b9be8, #2b9be8) 49px 0 / 3px 100% no-repeat #2b3032; }
.db { display: grid; grid-template-columns: 51px 1fr; height: 20px; color: #dadada; text-align: center; line-height: 21px; background: #7c8694; }
.db span:first-child { border-right: 1px solid #2b2d30; }
.ms { display: grid; grid-template: 25px 25px / repeat(3, 26px); gap: 1px; padding: 3px 4px; border-left: 1px solid #1c1e20; background: #4b4f54; }
.ms button { background: #383a3f; display: grid; place-items: center; font-size: 13px; box-shadow: 0 0 0 1px #1c1e20; }
.ms svg { width: 14px; height: 14px; }
.strip { display: grid; grid-template-columns: 51px 1fr; height: 304px; flex: none; }
.fader { display: flex; background: #7f8793; border-right: 1px solid #2b2d30; padding-bottom: 11px; }
.scale { width: 28px; height: 293px; padding-top: 3px; display: grid; grid-template-rows: 25px 25px 52px 28px 37px 40px 38px 18px 22px; background: linear-gradient(#24272b, #24272b) 15px 0 / 13px 100% no-repeat; font-size: 9px; line-height: 9px; color: #c9ccd0; }
.scale span { display: grid; grid-template-columns: 14px 9px; column-gap: 3px; align-items: center; justify-items: end; }
.scale span::after { content: ""; width: 9px; height: 1px; background: #1f567c; }
.scale span:nth-child(3)::after { background: #ccc; }
.fader input { appearance: none; writing-mode: vertical-lr; direction: rtl; width: 20px; height: 292px; margin-left: 1px; background: linear-gradient(#292c30, #292c30) 9px 16px / 2px 258px no-repeat, linear-gradient(90deg, transparent 3px, #969ba2 3px 17px, transparent 17px); }
.fader input::-webkit-slider-thumb { appearance: none; width: 18px; height: 37px; border: 2px solid #4d4d4d; border-radius: 3px; background: linear-gradient(#fff 0 2px, #888 2px 3px, #ccc 10px, #fff 16px, #555 16px 17px, #fff 18px 28px, #aaa 30px, #fff 31px); }
.inserts { font-size: 11px; background: #4b4e54; }
.ins-head, .ins { display: flex; align-items: center; gap: 3px; height: 21px; padding: 0 4px 0 2px; background: #46494c; color: #c6c6c6; border-top: 1px solid #2a2c2e; }
.ins-head span, .ins span { flex: 1; }
.ins-head .i12, .ins-head .i9 { color: #999; }
.ins-head.on .i12 { color: #2d97ea; }
.ins-head:not(.on) .i12 { color: #70757a; }
.ins { background: #59636a; border-color: #454d53; font-size: 10px; }
.ins svg { color: #63b7ef; }
.ins .dn { background: #7b7f82; }
.ins-gap { height: 11px; }
.blue-line { height: 4px; flex: none; background: #0860e0; border-top: 1px solid #222; }
.none { height: 28px; flex: none; background: #5b6b7e; color: #dfe2e5; text-align: center; line-height: 27px; border-bottom: 1px solid #2a2d33; }

/* arrangement */
.editor { display: grid; grid-template-columns: 257px minmax(0, 1fr); position: relative; margin-right: 2px; }
.tracks { display: flex; flex-direction: column; background: #3f434b; min-height: 0; }
.tracks .head { padding: 0 7px 0 6px; gap: 11px; }
#tracks { flex: 1; min-height: 0; overflow: hidden; }
.tr { display: grid; grid-template-columns: 10px 25px repeat(4, 24px) 94px 21px 11px; height: 6px; border-bottom: 1px solid #14294a; background: #244474; line-height: 5px; }
.tr i { background: #435d85; border-left: 2px solid #26395a; }
.tr .clr { background: #0448a4; border: 0; }
.tr b { font-size: 8px; text-align: right; padding-right: 5px; color: #b8c8df; }
.tr span { font-size: 7px; padding-left: 5px; color: #c2cede; }
.tr svg { width: 13px; height: 5px; color: #b3bfd0; }
.tr u { background: #484b4d; }
.tr.cur, .tr.cur i { background: #2468c2; }
.track-foot { display: flex; align-items: center; height: 17px; flex: none; padding-right: 8px; background: #35383d; font-size: 10px; color: #ddd; }
.track-foot button { width: 49px; height: 17px; padding-top: 1px; border-right: 1px solid #2d2f33; }
.track-foot .pw { color: #2d97ea; display: grid; place-items: center; }
.track-foot .more { flex: 1; border: 0; }
.track-foot .dn { margin: 0 17px 0 0; }
.arrange { display: grid; grid-template: 32px minmax(0, 1fr) 17px / minmax(0, 1fr) 16px; border-left: 1px solid #d8d8d8; }
.ruler { grid-column: 1 / 3; position: relative; overflow: hidden; background: linear-gradient(90deg, #2f3b50 400px, #272b31 400px); border-bottom: 1px solid #0b0c0d; }
.loop { height: 7px; background: linear-gradient(90deg, #4bb4f1 400px, #353e47 400px); }
.loop::after { content: ""; display: block; width: 9px; height: 15px; margin-left: 391px; background: #4bb4f1; clip-path: polygon(0 45%, 100% 45%, 100% 100%); }
#beats { display: flex; height: 24px; width: max-content; }
#beats span { width: 50px; padding: 0 0 0 1px; font-size: 10px; line-height: 15px; color: #b5bac0; background: linear-gradient(#ddd, #ddd) 0 100% / 1px 5px no-repeat, linear-gradient(#bbb, #bbb) 12px 100% / 1px 2px no-repeat, linear-gradient(#bbb, #bbb) 25px 100% / 1px 3px no-repeat, linear-gradient(#bbb, #bbb) 37px 100% / 1px 2px no-repeat; }
#beats .bar1 { font-size: 11px; color: #e3e5e8; background-size: 1px 9px, 1px 2px, 1px 3px, 1px 2px; }
.sig { position: absolute; left: 0; bottom: 0; padding: 0 1px; background: #8a8b8c; color: #fff; font-size: 10px; line-height: 12px; }
.canvas { min-height: 0; background: repeating-linear-gradient(90deg, #3b3d41 0 1px, transparent 1px 200px), repeating-linear-gradient(90deg, #2f3135 0 1px, transparent 1px 50px), repeating-linear-gradient(90deg, transparent 0 12px, #27292d 12px 13px, transparent 13px 25px, #27292d 25px 26px, transparent 26px 37px, #27292d 37px 38px, transparent 38px 50px), #1e2125; }
.lanes { height: 648px; background: linear-gradient(#2b3038, #2b3038) 0 100% / 100% 6px no-repeat, repeating-linear-gradient(transparent 0 5px, #2a2c30 5px 6px); }
.vscroll { display: flex; flex-direction: column; justify-content: space-between; align-items: center; padding: 5px 0; background: #36393d; }
.hscroll { grid-column: 1 / 3; display: flex; align-items: center; background: #383b40; padding: 1px 25px 0 7px; }
.hscroll b { width: 36px; height: 5px; margin-left: 9px; background: #828385; }
.hscroll .up { background: #686b78; margin-left: 10px; }
.hscroll .s { width: 10px; height: 8px; }
.hscroll .b { width: 14px; height: 10px; margin-left: 4px; }
.zoom { width: 66px; height: 2px; margin-left: 4px; background: #60636c; display: flex; align-items: center; }
.zoom u { width: 4px; height: 12px; margin-left: 16px; background: #777a84; }

/* performance monitor window */
.dialog { position: absolute; left: 339px; right: 110px; top: 181px; bottom: 28px; display: flex; flex-direction: column; background: #222528; box-shadow: 0 2px 14px #0009; color: #dedede; }
.dlg-title { display: flex; align-items: center; justify-content: space-between; height: 31px; flex: none; padding: 0 1px 0 8px; background: #0063b1; color: #fff; font: 11px/16px "Open Sans", "Noto Sans", sans-serif; }
.dlg-title button { width: 19px; height: 19px; margin-top: 4px; background: #c75050; font-size: 11px; font-weight: 700; line-height: 14px; }
.dlg-body { flex: 1; min-height: 0; display: flex; flex-direction: column; padding: 10px 10px 10px; }
.box { width: 277px; flex: none; background: #35363b; border: 1px solid #3e3f44; font-size: 11px; color: #c2c2c2; }
.box b { font-weight: 400; background: #383b42; text-align: center; line-height: 15px; }
.meters { display: grid; grid-template: 15px 15px / 34px 122px 34px 15px; gap: 12px 2px; padding: 9px 12px; height: 64px; font-size: 10px; }
.meter { display: flex; border: 1px solid #0c0e10; background: #1a2229; }
.meter i { background: repeating-linear-gradient(90deg, #0b5aa0 0 1px, transparent 1px 12px), repeating-linear-gradient(90deg, #22a0f6 0 2px, #1580d2 2px 3px); }
.meter em { background: repeating-linear-gradient(90deg, #e2aa12 0 2px, #a97d0e 2px 3px); border-right: 1px solid #7a2a10; }
.meters u { background: #2e2e2e; border: 1px solid #222; }
.meters span { padding-top: 1px; }
.protect { display: flex; justify-content: space-between; align-items: center; width: 277px; height: 24px; flex: none; margin: 10px 0; padding-left: 1px; }
.protect .sel { width: 110px; height: 24px; border: 1px solid #3e3f44; background: #1b1d20; padding-left: 8px; }
.protect .sel::after { margin: 0 4px 0 0; background: #777; }
.cache { height: 84px; }
.cache-h { display: grid; grid-template-columns: 1fr 12px; padding: 3px 3px 0 15px; height: 24px; border-bottom: 1px solid #2c2d31; text-align: center; font-size: 12px; color: #e6e6e6; line-height: 17px; }
.cache-h svg { color: #aaa; }
.cache-b { display: grid; grid-template: 15px 15px / 81px 122px 1fr; gap: 12px 0; padding: 6px 0 6px 12px; font-size: 10px; }
.cache-b svg { grid-column: 3; grid-row: 1 / 3; place-self: center; }
.show { display: flex; align-items: center; gap: 5px; height: 16px; flex: none; margin: 11px 0; }
.list { flex: 1; min-height: 0; display: flex; }
.list-view { flex: 1; overflow: hidden; background: #333438; }
.list-scroll { width: 15px; padding: 5px 3px; display: flex; flex-direction: column; }
.list-scroll b { width: 4px; height: 8px; margin: 7px 2px auto; background: #8b8b8b; }
table { width: 100%; table-layout: fixed; border-collapse: collapse; white-space: nowrap; color: #c8c8c8; }
.c1 { width: 66px; } .c2 { width: 28px; } .c3 { width: 23px; } .c4 { width: 21px; } .c5 { width: 120px; } .c6 { width: 70px; } .c7 { width: 250px; }
th { height: 24px; padding: 0 2px; font-weight: 400; text-align: left; background: #424749; color: #e6e6e6; position: relative; }
th input[type=checkbox] { background: #3c4144; border-color: #53585b; }
.sorted::before { content: ""; position: absolute; left: 55px; top: 1px; width: 8px; height: 4px; background: #fff; clip-path: polygon(0 0, 100% 0, 50% 100%); }
td { height: 22px; padding: 0; }
td:nth-child(2) { padding-left: 6px; }
td:nth-child(3), th:nth-child(2) { padding: 0 3px; }
td:nth-child(4) { padding: 0 3px; }
.use { width: 56px; height: 8px; margin-left: 4px; background: #232426; }
.fx { display: block; width: 16px; height: 16px; background: #4a4e55; border-radius: 2px; font-size: 10px; font-weight: 700; text-align: center; line-height: 16px; }
.off { color: #77787a; }
.off .use { background: #2d2e30; }
.off .fx { background: linear-gradient(#414246 56%, #333438 56% 62%, #55575a 62%); line-height: 10px; font-size: 9px; }
.off input[type=checkbox] { border-color: #3e3f42; background: #323337; }
td input[type=checkbox] { background: #2e2f33; border-color: #424347; }

/* browser */
.browser { display: flex; flex-direction: column; background: #35373f; }
.tabs { display: flex; align-items: center; height: 31px; flex: none; background: #323438; border-bottom: 1px solid #222; font-size: 11px; }
.tabs a { line-height: 30px; padding: 0 6px; }
.tabs .act { background: #505b66; border-top: 1px solid #64798f; color: #fff; }
.tabs .cloud { padding-left: 2px; }
.tabs .dn { margin: 0 6px 0 auto; }
.tabs svg { margin-right: 4px; }
.tabs .home svg { margin: 0; }
.sort { display: flex; align-items: center; justify-content: space-between; height: 20px; flex: none; padding: 0 4px 0 5px; background: #505b66; color: #929ba4; }
.sort .lead { color: #bcc3ca; margin-right: 5px; }
.sort .act { color: #fff; }
.tree { list-style: none; margin: 0; padding: 0; flex: 1; }
.tree li { display: flex; align-items: center; height: 22px; padding-left: 27px; }
.tree .last { border-bottom: 1px solid #525863; }
.tree svg { width: 16px; height: 16px; margin: 0 5px 0 4px; }
.tree .f { width: 13px; height: 13px; margin-right: 8px; }
.tree .rt, .tree .open { background: #ddd; }
.tree .open { margin: 0 0 0 -1px; }
.tree .sub { padding-left: 44px; }
.preview { display: flex; height: 100px; flex: none; background: #42464d; padding: 8px 9px; }
.preview svg { width: 28px; height: 24px; margin: 5px 13px 0 0; }
.preview strong { display: block; font-weight: 400; font-size: 15px; line-height: 16px; color: #eee; margin-bottom: 2px; }

/* transport */
.transport { display: flex; height: 49px; flex: none; background: linear-gradient(#6d737b 42px, #3c3e42 44px, #53565c); }
.tp { flex: 1; height: 42px; margin-left: 165px; padding-left: 17px; display: grid; grid-template-columns: 42px 74px 44px 69px 91px 100px 168px 132px 160px 125px 57px 68px 54px 34px 60px 1fr; background: #141414; color: #d5d5d5; font-size: 13px; clip-path: polygon(0 0, calc(100% - 158px) 0, calc(100% - 169px) 100%, 9px 100%); }
.tp small { display: block; font-size: 11px; line-height: 14px; color: #868683; }
.tp > div { padding-top: 6px; white-space: nowrap; }
.c { text-align: center; }
.l { padding-left: 4px; }
.c span, .l span { display: block; height: 17px; line-height: 17px; }
.l .tight { font-size: 12px; line-height: 14px; }
.tp strong { display: block; font-size: 19px; line-height: 17px; height: 17px; }
.midi { width: 28px; height: 16px; margin: 0 auto 1px; }
.tp .mid { padding: 9px 0 0 9px; }
.load { padding-left: 3px; }
.bar { width: 67px; height: 5px; margin: 2px 0 2px; background: linear-gradient(90deg, #35383c 56px, #222426 56px); }
.load small { text-align: center; color: #b5b5b5; margin-top: 3px; margin-right: 6px; }
.bar i { display: block; height: 5px; background: #53a6d5; }
.bar + .bar { margin-bottom: 0; }
.tp button svg { fill: #c2c2c2; }
.tp .nav { display: flex; align-items: center; padding: 0 0 0 4px; }
.nav button { width: 12px; margin-right: 10px; }
.nav .w2 { width: 18px; margin-right: 12px; }
.nav .w2 + .w2 { margin-right: 8px; }
.nav .rtz { margin-left: 4px; }
.tp .main { display: flex; align-items: center; gap: 15px; padding: 0 0 0 9px; }
.main button { width: 20px; height: 20px; }
.main .cyc { width: 32px; }
.lr { display: grid; grid-template: 16px 15px / 14px 1fr; padding-left: 6px; align-items: center; color: #577388; }
.lr b { font-weight: 400; color: #d5d5d5; }
.four { display: grid; grid-template: 16px 16px / 16px 16px; gap: 1px 11px; padding-left: 8px; }
.four svg { width: 16px; height: 13px; }
.c .met { display: flex; justify-content: center; gap: 9px; }
.met svg { width: 12px; height: 12px; color: #999; }
.out-m { padding-left: 9px; }
.tp > .out-m { padding-top: 8px; }
.lv { width: 90px; height: 5px; margin-bottom: 1px; background: linear-gradient(90deg, #35393d 67px, #1c1c1c 67px); }
.vol { display: flex; gap: 7px; align-items: center; margin-top: 6px; }
.vol i { width: 67px; height: 9px; background: linear-gradient(90deg, transparent 50px, #141414b0 50px), repeating-linear-gradient(90deg, #62c0ec 0 1px, #1f3d4c 1px 2px); }
.vol svg { width: 17px; height: 10px; }
.view { width: 56px; height: 49px; border-left: 1px solid #55585e; color: #eee; background: linear-gradient(transparent 44px, #55585e 44px); }
.view.on { width: 65px; border: 0; background: linear-gradient(#3b9adf 44px, #27577d 44px); }

/* taskbar */
.taskbar { display: flex; height: 40px; flex: none; background: #002c4f; color: #fff; font-family: "Open Sans", "Noto Sans", sans-serif; }
.taskbar button { width: 49px; height: 40px; display: grid; place-items: center; }
.taskbar button svg { width: 24px; height: 24px; }
.run { background: linear-gradient(#8fc3f2, #8fc3f2) center bottom / 40px 2px no-repeat; }
.taskbar .cur { background: linear-gradient(transparent 38px, #8fc3f2 38px), #004175; }
.tray { display: flex; align-items: center; gap: 8px; }
.tray svg { width: 16px; height: 16px; }
.clock { width: 64px; text-align: center; font-size: 11px; line-height: 18px; }
.clock span { display: block; }
.tray .note-ic { width: 26px; height: 26px; margin: 5px 10px 0 6px; }
.peek { width: 5px; border-left: 1px solid #5b7388; }
```
